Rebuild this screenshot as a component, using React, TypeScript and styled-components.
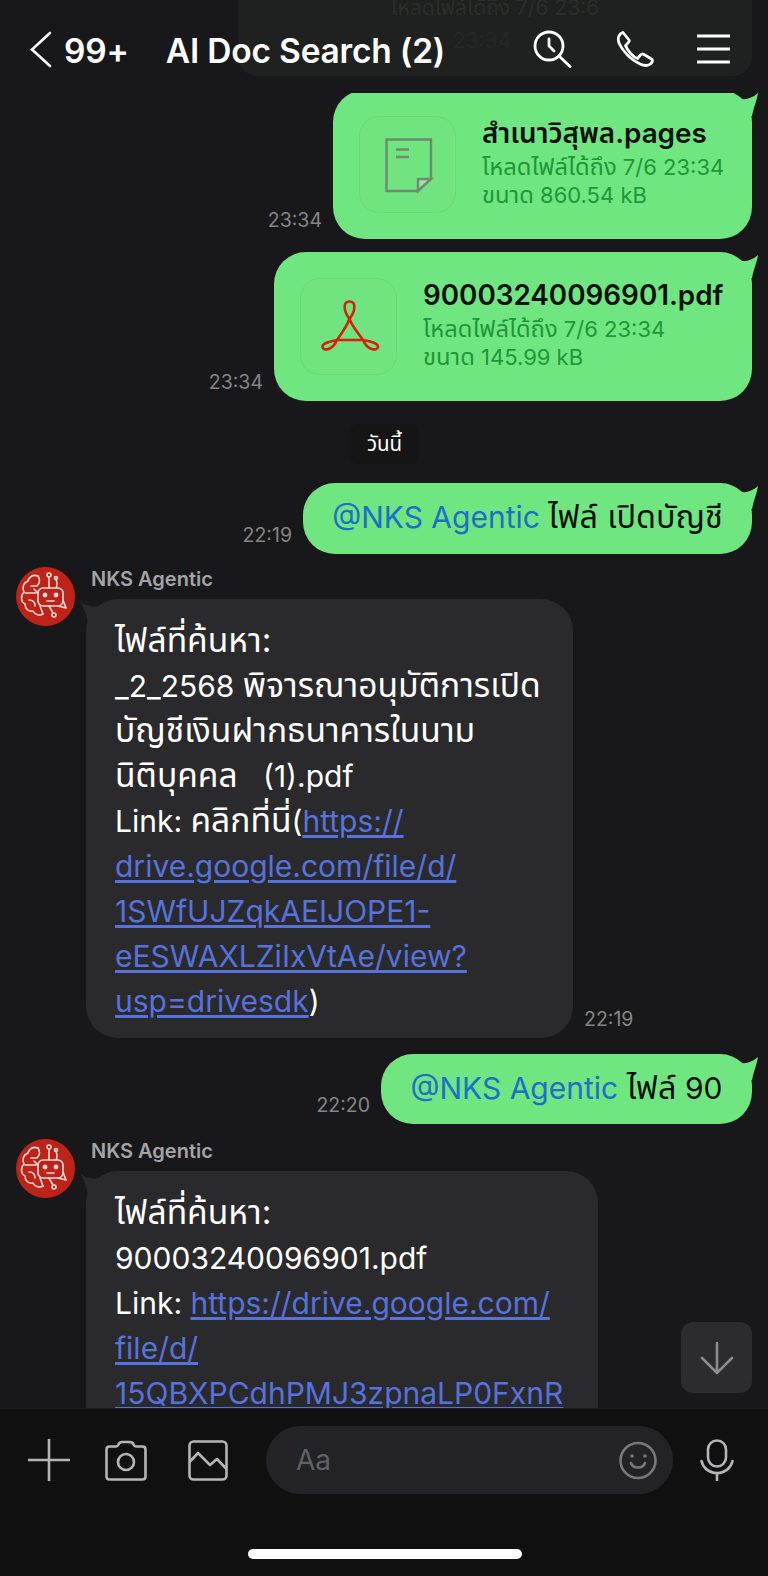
import React from "react";
import styled, { createGlobalStyle } from "styled-components";

const GlobalStyle = createGlobalStyle`
  html, body {
    margin: 0;
    padding: 0;
    background: #18181a;
  }
  * {
    box-sizing: border-box;
  }
`;

const Screen = styled.div`
  position: relative;
  width: 768px;
  height: 1576px;
  display: flex;
  flex-direction: column;
  overflow: hidden;
  background: #18181a;
  color: #fff;
  font-family: Inter, "Noto Sans", "Noto Sans Thai", "Liberation Sans", sans-serif;
`;

const Thai = styled.span`
  font-size: 1.08em;
  line-height: 1;
`;

const Header = styled.header`
  position: relative;
  z-index: 3;
  flex: 0 0 93px;
  display: flex;
  align-items: center;
  padding: 14px 38px 9px 30px;
  background: #18181a;
`;

const PinnedGhost = styled.div`
  position: absolute;
  left: 238px;
  top: 0;
  width: 514px;
  height: 76px;
  padding: 0 0 0 153px;
  background: #1e211f;
  border-radius: 0 0 20px 20px;
  color: #2b2e2b;
  font-size: 21px;
  line-height: 16px;
`;

const GhostLine = styled.div`
  margin: 17px 0 0 62px;
  color: #252826;
`;

const BackButton = styled.svg`
  width: 22px;
  height: 37px;
  margin-right: 12px;
  position: relative;
`;

const HeaderLabel = styled.span`
  position: relative;
  padding-top: 4px;
  font-size: 33.5px;
  font-weight: 600;
  letter-spacing: -0.2px;
  white-space: nowrap;
`;

const Title = styled(HeaderLabel)`
  margin-left: 37px;
  flex: 1;
`;

const HeaderIcons = styled.div`
  position: relative;
  display: flex;
  align-items: center;
  gap: 43px;
`;

const MessageList = styled.main`
  flex: 1;
  min-height: 0;
  overflow: hidden;
  display: flex;
  flex-direction: column;
  padding: 0 16px;
`;

const OutgoingRow = styled.div<{ $top: number }>`
  display: flex;
  flex: none;
  justify-content: flex-end;
  align-items: flex-end;
  gap: 11px;
  margin-top: ${(p) => p.$top}px;
`;

const Time = styled.span`
  font-size: 19.5px;
  line-height: 22px;
  color: #858587;
  margin-bottom: 8px;
  white-space: nowrap;
`;

const GreenBubble = styled.div<{ $width: number }>`
  position: relative;
  width: ${(p) => p.$width}px;
  background: #70e680;
  border-radius: 32px;
  color: #0b0f0b;
  &::after {
    content: "";
    position: absolute;
    right: -6px;
    top: 2px;
    width: 24px;
    height: 24px;
    background: #70e680;
    clip-path: path("M0 4 C 8 9, 16 8, 24 1 C 23 8, 20 14, 18 24 L 0 24 Z");
  }
`;

const TextBubble = styled(GreenBubble)<{ $height: number }>`
  height: ${(p) => p.$height}px;
  padding-bottom: 3px;
  display: flex;
  align-items: center;
  justify-content: center;
  font-size: 30px;
  white-space: nowrap;
`;

const Mention = styled.span`
  color: #1d6fca;
`;

const FileBubble = styled(GreenBubble)`
  display: flex;
  align-items: flex-start;
  gap: 26px;
  padding: 26px;
`;

const FileThumb = styled.div`
  flex: none;
  width: 97px;
  height: 97px;
  border-radius: 20px;
  border: 1px solid #68db77;
  background: #6fe47f;
`;

const FileText = styled.div`
  min-width: 0;
  white-space: nowrap;
  margin-right: -20px;
`;

const FileName = styled.div`
  font-size: 27.8px;
  font-weight: 600;
  line-height: 34px;
  margin-bottom: 3px;
`;

const FileMeta = styled.div`
  font-size: 22px;
  line-height: 28px;
  color: #1f9638;
`;

const DateChip = styled.div`
  flex: none;
  align-self: flex-start;
  margin: 23px 0 19px 334px;
  width: 69px;
  height: 40px;
  display: flex;
  align-items: center;
  justify-content: center;
  background: #151516;
  border-radius: 8px;
  font-size: 19px;
`;

const IncomingRow = styled.div<{ $top: number }>`
  display: flex;
  flex: none;
  align-items: flex-start;
  gap: 11px;
  margin-top: ${(p) => p.$top}px;
`;

const Avatar = styled.svg`
  flex: none;
  width: 59px;
  height: 59px;
`;

const IncomingColumn = styled.div`
  display: flex;
  flex-direction: column;
  min-width: 0;
`;

const SenderName = styled.div`
  font-size: 20px;
  font-weight: 600;
  line-height: 24px;
  height: 32px;
  padding-left: 5px;
  color: #a3a4a6;
`;

const IncomingBody = styled.div`
  display: flex;
  align-items: flex-end;
  gap: 11px;
`;

const GrayBubble = styled.div<{ $width: number; $minHeight?: number }>`
  position: relative;
  width: ${(p) => p.$width}px;
  min-height: ${(p) => p.$minHeight ?? 0}px;
  padding: 20px 0 14px 29px;
  background: #2a2a2c;
  border-radius: 32px;
  font-size: 30px;
  line-height: 45px;
  white-space: nowrap;
  ${Thai} {
    font-size: 1.12em;
  }
  &::before {
    content: "";
    position: absolute;
    left: -6px;
    top: 2px;
    width: 22px;
    height: 22px;
    background: #2a2a2c;
    clip-path: path("M0 0 C 6 6, 14 7, 22 4 L 22 22 L 8 22 C 7 14, 4 7, 0 0 Z");
  }
`;

const LinkText = styled.a`
  color: #5672dd;
  text-decoration: underline;
  text-underline-offset: 3px;
`;

const ScrollDown = styled.button`
  position: absolute;
  z-index: 2;
  right: 16px;
  top: 1322px;
  width: 71px;
  height: 71px;
  padding: 0;
  border: 0;
  border-radius: 12px;
  background: #2c2c2e;
  display: flex;
  align-items: center;
  justify-content: center;
`;

const Composer = styled.footer`
  position: relative;
  z-index: 3;
  flex: 0 0 168px;
  background: #101011;
  border-top: 1px solid #1c1c1e;
  display: flex;
  flex-direction: column;
`;

const ComposerRow = styled.div`
  display: flex;
  align-items: center;
  padding: 17px 0 0 28px;
`;

const ToolIcon = styled.svg<{ $after: number }>`
  flex: none;
  margin-right: ${(p) => p.$after}px;
`;

const InputPill = styled.div`
  flex: none;
  width: 407px;
  height: 68px;
  margin-right: 27px;
  padding: 0 16px 0 30px;
  display: flex;
  align-items: center;
  justify-content: space-between;
  background: #232325;
  border-radius: 34px;
`;

const Placeholder = styled.span`
  font-size: 28px;
  color: #606164;
`;

const HomeBar = styled.div`
  width: 274px;
  height: 10px;
  margin: 55px 0 0 248px;
  background: #fff;
  border-radius: 5px;
`;

const PageIcon = () => (
  <svg width="97" height="97" viewBox="19 16 97 97" fill="none" stroke="#6f8a70" strokeWidth="2.4">
    <path d="M45.5 38.5 H90 V77 L77 90 H45.5 Z" />
    <path d="M77 90 V78 H90 L77 90 Z" fill="#a6dca4" />
    <path d="M55 48.5 H68 M55 56 H68" />
  </svg>
);

const PdfIcon = () => (
  <svg width="97" height="97" viewBox="20 13 97 97" fill="none" stroke="#d8200f" strokeWidth="2.6" strokeLinejoin="round">
    <path d="M68.5 53 C 62 44, 62 35.5, 68.5 35.5 C 75 35.5, 75 44, 68.5 53 C 66 60, 61 67, 56 74 C 49 75.5, 41 77, 41.5 81 C 42 85.5, 52 84, 56 74 H 82 C 86 84, 96 85.5, 97 81 C 97.5 77, 89 75.5, 82 74 C 77 67, 71 60, 68.5 53 Z" />
  </svg>
);

const RobotAvatar = () => (
  <Avatar viewBox="0 0 59 59" fill="none">
    <circle cx="29.5" cy="29.5" r="29.5" fill="#bd2318" />
    <g stroke="#f6d9d2" strokeWidth="1.6" strokeLinecap="round" strokeLinejoin="round">
      <path d="M22 9 C 17 7, 13 10, 12 14 C 7 16, 6 21, 8 25 C 4 29, 5 35, 9 37 C 9 42, 13 45, 17 44 C 19 48, 24 49, 27 47" />
      <path d="M22 9 C 24 12, 24 16, 21 19 H 15 M9 26 H 20 M13 33 C 17 33, 19 35, 19 39 M27 47 L 24 39 M18 22 L 22 26" />
      <path d="M33 10 V 21 M40 12 C 41 15, 42 18, 40 21" />
      <circle cx="33" cy="8" r="2" />
      <circle cx="40" cy="11" r="1.5" />
      <rect x="22" y="21" width="25" height="18" rx="5" />
      <path d="M47 33 L 50 41 L 42 39" />
      <path d="M33 39 L 37 46" />
      <circle cx="38" cy="48" r="2" />
    </g>
    <circle cx="29" cy="28" r="2.4" fill="#f6d9d2" />
    <circle cx="40" cy="28" r="2.4" fill="#f6d9d2" />
    <path d="M31 34 H 38" stroke="#f6d9d2" strokeWidth="1.6" strokeLinecap="round" />
  </Avatar>
);

const FirstLinkLines = () => (
  <>
    <div>
      Link: <Thai>คลิกที่นี่</Thai>(<LinkText>https://</LinkText>
    </div>
    <div>
      <LinkText>drive.google.com/file/d/</LinkText>
    </div>
    <div>
      <LinkText>1SWfUJZqkAEIJOPE1-</LinkText>
    </div>
    <div>
      <LinkText>eESWAXLZiIxVtAe/view?</LinkText>
    </div>
    <div>
      <LinkText>usp=drivesdk</LinkText>)
    </div>
  </>
);

export default function App() {
  return (
    <>
      <GlobalStyle />
      <Screen>
        <Header>
          <PinnedGhost>
            โหลดไฟล์ได้ถึง 7/6 23:6
            <GhostLine>23:34</GhostLine>
          </PinnedGhost>
          <BackButton viewBox="0 0 22 37" fill="none" stroke="#fff" strokeWidth="2.6" strokeLinecap="round">
            <path d="M20 2 L 2 18.5 L 20 35" />
          </BackButton>
          <HeaderLabel>99+</HeaderLabel>
          <Title>AI Doc Search (2)</Title>
          <HeaderIcons>
            <svg width="40" height="38" viewBox="0 0 40 38" fill="none" stroke="#fff" strokeWidth="2.8" strokeLinecap="round">
              <circle cx="16" cy="16" r="14" />
              <path d="M16 9 V 16 L 21 21 M26 26 L 37 36.5" />
            </svg>
            <svg width="38" height="36" viewBox="0 0 38 36" fill="none" stroke="#fff" strokeWidth="2.8" strokeLinejoin="round">
              <path d="M7 1.5 L 13 9 C 13.5 10, 13 11, 12 12 L 9.5 14.5 C 11 19, 17 26, 21.5 27.5 L 24.5 24 C 25.5 23, 26.5 22.5, 27.5 23.2 L 35.5 28 C 37 29, 36.5 31, 35 32.5 C 32.5 35, 28.5 35, 24 33 C 15 29, 7 20.5, 3.5 13 C 1 8, 2.5 3, 7 1.5 Z" />
            </svg>
            <svg width="33" height="30" viewBox="0 0 33 30" stroke="#fff" strokeWidth="3">
              <path d="M0 2 H 33 M0 15 H 33 M0 28 H 33" />
            </svg>
          </HeaderIcons>
        </Header>

        <MessageList>
          <OutgoingRow $top={-3}>
            <Time>23:34</Time>
            <FileBubble $width={419}>
              <FileThumb>
                <PageIcon />
              </FileThumb>
              <FileText>
                <FileName>สำเนาวิสุพล.pages</FileName>
                <FileMeta>
                  <Thai>โหลดไฟล์ได้ถึง</Thai> 7/6 23:34
                </FileMeta>
                <FileMeta>
                  <Thai>ขนาด</Thai> 860.54 kB
                </FileMeta>
              </FileText>
            </FileBubble>
          </OutgoingRow>

          <OutgoingRow $top={13}>
            <Time>23:34</Time>
            <FileBubble $width={478}>
              <FileThumb>
                <PdfIcon />
              </FileThumb>
              <FileText>
                <FileName>90003240096901.pdf</FileName>
                <FileMeta>
                  <Thai>โหลดไฟล์ได้ถึง</Thai> 7/6 23:34
                </FileMeta>
                <FileMeta>
                  <Thai>ขนาด</Thai> 145.99 kB
                </FileMeta>
              </FileText>
            </FileBubble>
          </OutgoingRow>

          <DateChip>
            <Thai>วันนี้</Thai>
          </DateChip>

          <OutgoingRow $top={0}>
            <Time>22:19</Time>
            <TextBubble $width={449} $height={71}>
              <span>
                <Mention>@NKS Agentic</Mention> <Thai>ไฟล์ เปิดบัญชี</Thai>
              </span>
            </TextBubble>
          </OutgoingRow>

          <IncomingRow $top={13}>
            <RobotAvatar />
            <IncomingColumn>
              <SenderName>NKS Agentic</SenderName>
              <IncomingBody>
                <GrayBubble $width={487}>
                  <div>
                    <Thai>ไฟล์ที่ค้นหา:</Thai>
                  </div>
                  <div>
                    _2_2568 <Thai>พิจารณาอนุมัติการเปิด</Thai>
                  </div>
                  <div>
                    <Thai>บัญชีเงินฝากธนาคารในนาม</Thai>
                  </div>
                  <div>
                    <Thai>นิติบุคคล</Thai>&nbsp;&nbsp; (1).pdf
                  </div>
                  <FirstLinkLines />
                </GrayBubble>
                <Time>22:19</Time>
              </IncomingBody>
            </IncomingColumn>
          </IncomingRow>

          <OutgoingRow $top={16}>
            <Time>22:20</Time>
            <TextBubble $width={371} $height={70}>
              <span>
                <Mention>@NKS Agentic</Mention> <Thai>ไฟล์</Thai> 90
              </span>
            </TextBubble>
          </OutgoingRow>

          <IncomingRow $top={15}>
            <RobotAvatar />
            <IncomingColumn>
              <SenderName>NKS Agentic</SenderName>
              <IncomingBody>
                <GrayBubble $width={512} $minHeight={320}>
                  <div>
                    <Thai>ไฟล์ที่ค้นหา:</Thai>
                  </div>
                  <div>90003240096901.pdf</div>
                  <div>
                    Link: <LinkText>https://drive.google.com/</LinkText>
                  </div>
                  <div>
                    <LinkText>file/d/</LinkText>
                  </div>
                  <div>
                    <LinkText>15QBXPCdhPMJ3zpnaLP0FxnR</LinkText>
                  </div>
                </GrayBubble>
              </IncomingBody>
            </IncomingColumn>
          </IncomingRow>
        </MessageList>

        <ScrollDown aria-label="scroll to latest">
          <svg width="34" height="34" viewBox="0 0 34 34" fill="none" stroke="#8b8c8e" strokeWidth="2.6" strokeLinecap="round">
            <path d="M17 2 V 32 M2 17 L 17 32 L 32 17" />
          </svg>
        </ScrollDown>

        <Composer>
          <ComposerRow>
            <ToolIcon $after={35} width="42" height="42" viewBox="0 0 42 42" stroke="#b4b5b7" strokeWidth="2.6">
              <path d="M21 0 V 42 M0 21 H 42" />
            </ToolIcon>
            <ToolIcon $after={41} width="42" height="41" viewBox="0 0 42 41" fill="none" stroke="#b4b5b7" strokeWidth="2.6" strokeLinejoin="round">
              <path d="M1.5 9.5 Q 1.5 6.5 4.5 6.5 H 11 Q 12.5 6.5 13.5 4.5 Q 14.5 2 17 2 H 25 Q 27.5 2 28.5 4.5 Q 29.5 6.5 31 6.5 H 37.5 Q 40.5 6.5 40.5 9.5 V 36.5 Q 40.5 39.5 37.5 39.5 H 4.5 Q 1.5 39.5 1.5 36.5 Z" />
              <circle cx="21" cy="22" r="8" />
            </ToolIcon>
            <ToolIcon $after={38} width="40" height="41" viewBox="0 0 40 41" fill="none" stroke="#b4b5b7" strokeWidth="2.6" strokeLinejoin="round">
              <rect x="1.5" y="1.5" width="37" height="38" rx="4" />
              <path d="M1.5 22 L 10 13 L 22 25 L 29 19 L 38.5 29" />
            </ToolIcon>
            <InputPill>
              <Placeholder>Aa</Placeholder>
              <svg width="38" height="39" viewBox="0 0 38 39" fill="none" stroke="#77787a" strokeWidth="2.6" strokeLinecap="round">
                <circle cx="19" cy="19.5" r="17.5" />
                <path d="M12 22 C 14 28, 24 28, 26 22" />
                <circle cx="13" cy="15" r="1.8" fill="#77787a" stroke="none" />
                <circle cx="26" cy="15" r="1.8" fill="#77787a" stroke="none" />
              </svg>
            </InputPill>
            <svg width="34" height="42" viewBox="0 0 34 42" fill="none" stroke="#b4b5b7" strokeWidth="2.6" strokeLinecap="round">
              <rect x="8" y="1.5" width="18" height="26" rx="9" />
              <path d="M1.5 22 C 3 29, 9 34, 17 34 C 25 34, 31 29, 32.5 22 M17 34 V 42" />
            </svg>
          </ComposerRow>
          <HomeBar />
        </Composer>
      </Screen>
    </>
  );
}
